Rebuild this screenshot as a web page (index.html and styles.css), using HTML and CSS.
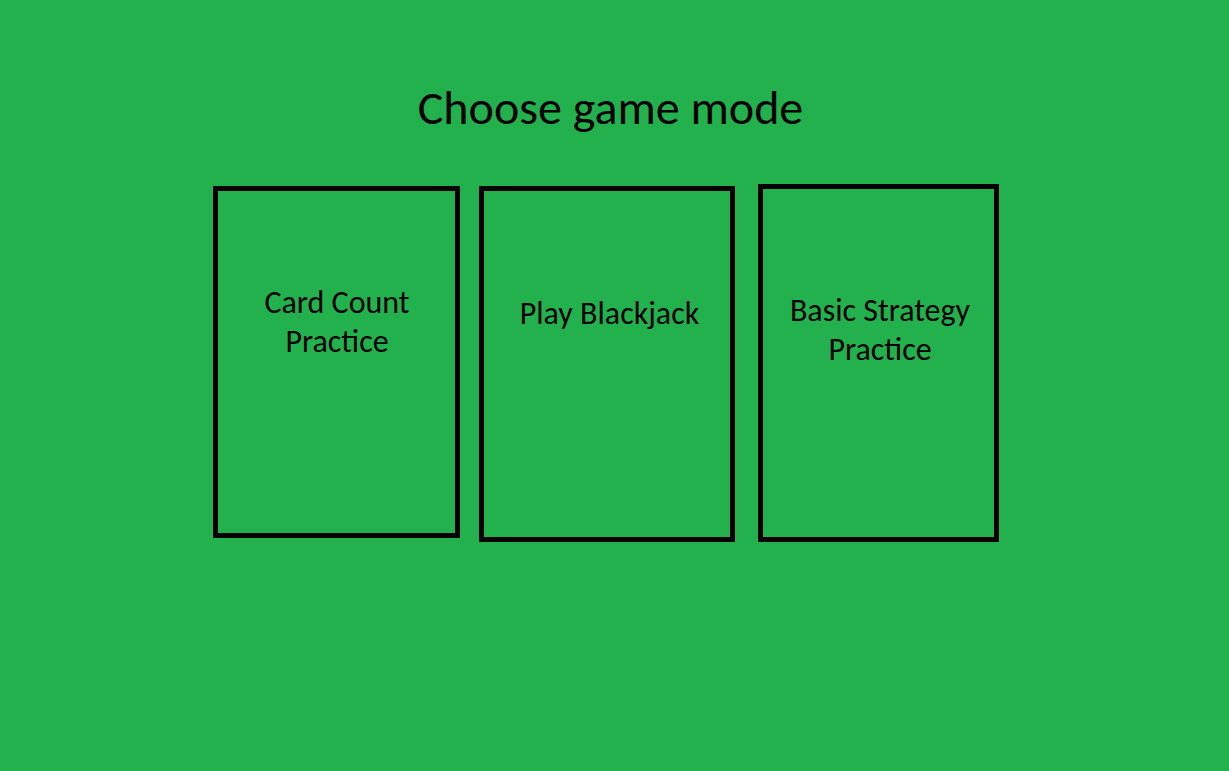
FILE: index.html
```html
<!DOCTYPE html>
<html lang="en">
<head>
<meta charset="utf-8">
<title>Choose game mode</title>
<link rel="stylesheet" href="styles.css">
</head>
<body>
<main class="page">
  <h1 class="title">Choose game mode</h1>
  <div class="modes">
    <button type="button" class="mode mode-count">Card Count<br>Practice</button>
    <button type="button" class="mode mode-play">Play Blackjack</button>
    <button type="button" class="mode mode-strategy">Basic Strategy<br>Practice</button>
  </div>
</main>
</body>
</html>
```
FILE: styles.css
```css
* { box-sizing: border-box; }

body {
  margin: 0;
  min-height: 100vh;
  background: #22b14c;
  color: #000;
  font-family: Carlito, Calibri, "Open Sans", "Noto Sans", sans-serif;
}

.page {
  padding: 80px 16px 32px;
}

.title {
  margin: 0;
  padding-right: 8px;
  font-size: 48px;
  line-height: 56px;
  font-weight: 400;
  text-align: center;
}

.modes {
  display: flex;
  justify-content: center;
  align-items: flex-start;
  margin-top: 48px;
  padding-right: 18px;
}

.mode {
  display: flex;
  justify-content: center;
  align-items: flex-start;
  border: 5px solid #000;
  background: transparent;
  color: inherit;
  font: inherit;
  font-size: 32px;
  line-height: 39px;
  text-align: center;
  cursor: pointer;
}

.mode-count {
  flex: 0 1 247px;
  min-height: 352px;
  margin: 2px 19px 0 0;
  padding: 92px 0 0 2px;
}

.mode-play {
  flex: 0 1 256px;
  min-height: 356px;
  margin: 2px 23px 0 0;
  padding: 103px 0 0 6px;
}

.mode-strategy {
  flex: 0 1 241px;
  min-height: 358px;
  padding: 102px 0 0 4px;
}
```
